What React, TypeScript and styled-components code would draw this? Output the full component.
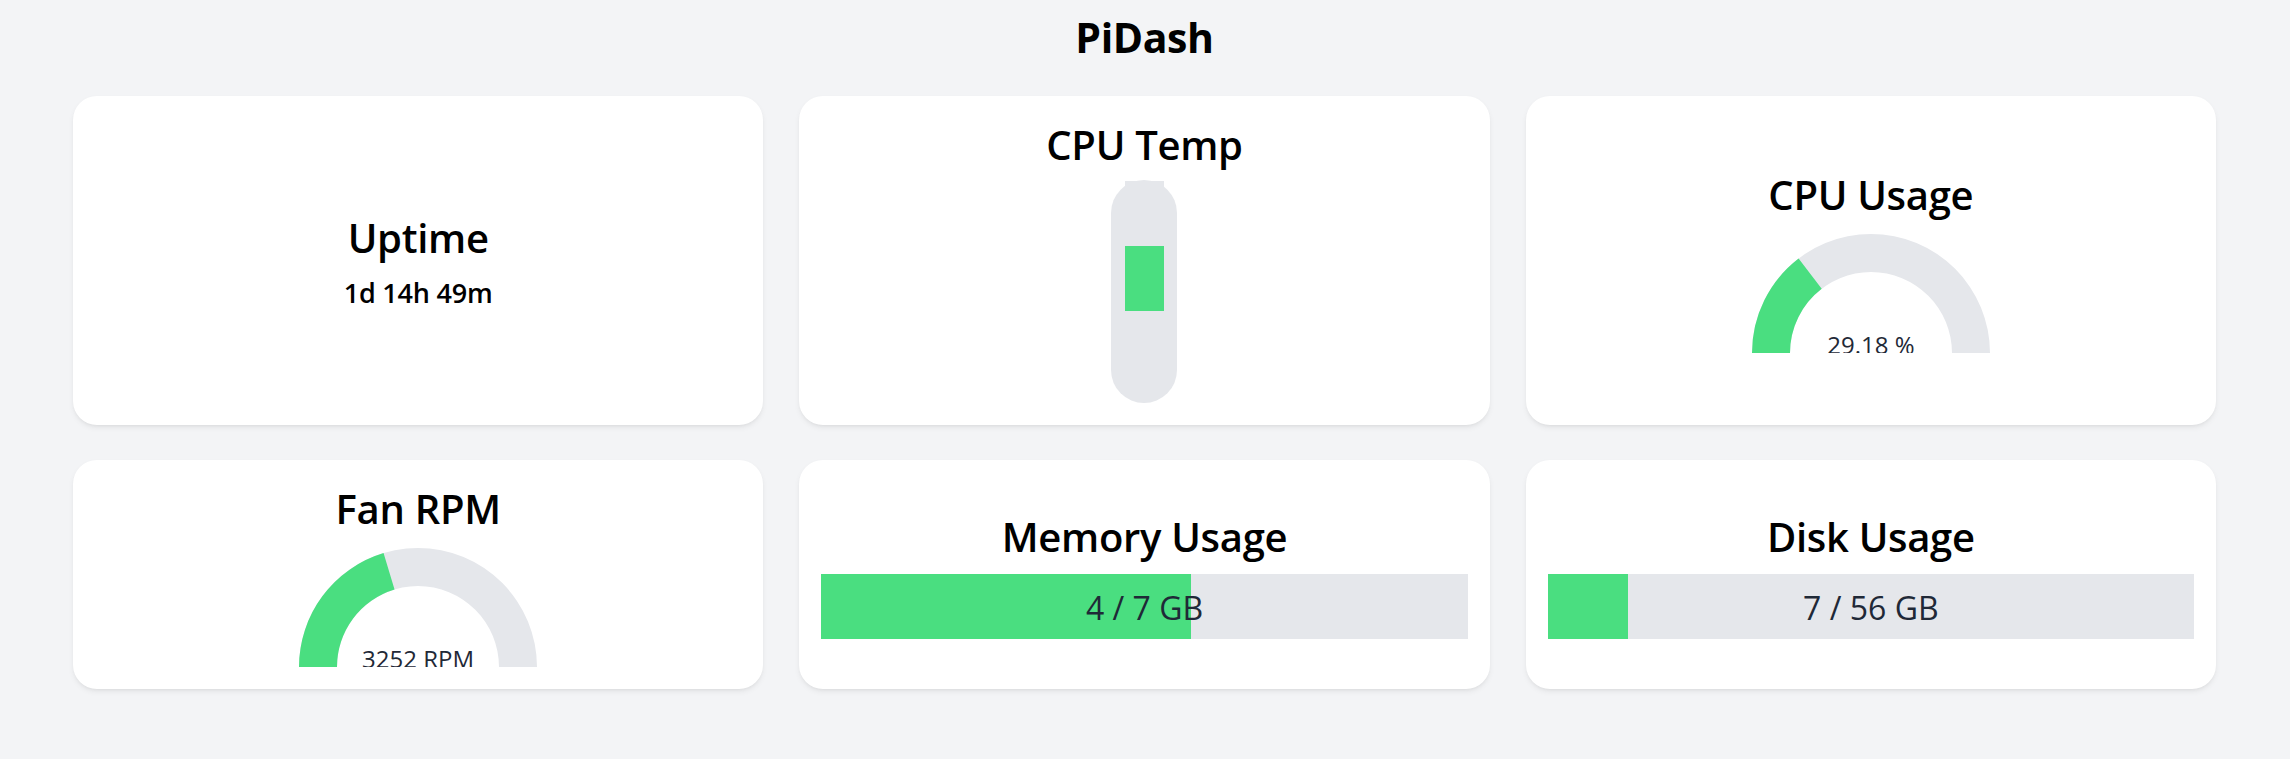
import React from "react";
import styled, { createGlobalStyle } from "styled-components";

const GlobalStyle = createGlobalStyle`
  html, body {
    margin: 0;
    padding: 0;
    background: #f3f4f6;
    font-family: "Open Sans", "Noto Sans", "Liberation Sans", sans-serif;
    color: #000;
  }
  * { box-sizing: border-box; }
`;

const GREEN = "#4ade80";
const TRACK = "#e5e7eb";

const Page = styled.div`
  padding: 13px 74px 40px 73px;
  display: flex;
  flex-direction: column;
  gap: 35px;
`;

const Header = styled.h1`
  margin: 0;
  text-align: center;
  font-size: 41px;
  line-height: 48px;
  font-weight: 700;
  font-stretch: 92%;
  letter-spacing: -0.4px;
`;

const Grid = styled.div`
  display: grid;
  grid-template-columns: repeat(3, 1fr);
  column-gap: 36px;
  row-gap: 35px;
`;

const Card = styled.section<{ $gap: number }>`
  background: #fff;
  border-radius: 24px;
  box-shadow: 0 3px 6px -1px rgba(0, 0, 0, 0.08), 0 2px 4px -2px rgba(0, 0, 0, 0.06);
  padding: 22px;
  display: flex;
  flex-direction: column;
  align-items: center;
  justify-content: center;
  gap: ${(p) => p.$gap}px;
`;

const Title = styled.h2`
  margin: 0;
  font-size: 40px;
  line-height: 54px;
  font-weight: 600;
  font-stretch: 92%;
  letter-spacing: -0.3px;
  text-align: center;
`;

const Value = styled.div`
  font-size: 27px;
  line-height: 36px;
  font-weight: 600;
  font-stretch: 92%;
  letter-spacing: -0.2px;
`;

const BarTrack = styled.div`
  width: 100%;
  height: 65px;
  background: ${TRACK};
  display: grid;
  grid-template: 1fr / 1fr;
`;

const BarFill = styled.div`
  grid-area: 1 / 1;
  height: 100%;
  background: ${GREEN};
`;

const BarLabel = styled.div`
  grid-area: 1 / 1;
  align-self: center;
  justify-self: center;
  font-size: 32px;
  font-weight: 400;
  font-stretch: 92%;
  color: #1f2937;
  line-height: 1;
  padding-top: 2px;
`;

const GaugeSvg = styled.svg`
  display: block;
  overflow: hidden;
`;

const GaugeText = styled.text`
  font-family: "Open Sans", "Noto Sans", sans-serif;
  font-size: 24px;
  font-stretch: 92%;
  fill: #1f2937;
`;

function sector(cx: number, cy: number, ro: number, ri: number, a0: number, a1: number) {
  const pt = (r: number, a: number) => [cx - r * Math.cos(a), cy - r * Math.sin(a)];
  const [x0, y0] = pt(ro, a0);
  const [x1, y1] = pt(ro, a1);
  const [x2, y2] = pt(ri, a1);
  const [x3, y3] = pt(ri, a0);
  const large = a1 - a0 > Math.PI ? 1 : 0;
  return `M ${x0} ${y0} A ${ro} ${ro} 0 ${large} 1 ${x1} ${y1} L ${x2} ${y2} A ${ri} ${ri} 0 ${large} 0 ${x3} ${y3} Z`;
}

function Gauge({ fraction, label }: { fraction: number; label: string }) {
  const w = 238;
  const h = 119;
  const cx = w / 2;
  const cy = h;
  const ro = 119;
  const ri = 81;
  return (
    <GaugeSvg width={w} height={h} viewBox={`0 0 ${w} ${h}`}>
      <path d={sector(cx, cy, ro, ri, 0, Math.PI)} fill={TRACK} />
      <path d={sector(cx, cy, ro, ri, 0, Math.PI * fraction)} fill={GREEN} />
      <GaugeText x={cx} y={h + 1} textAnchor="middle">
        {label}
      </GaugeText>
    </GaugeSvg>
  );
}

function Thermometer({ top, height }: { top: number; height: number }) {
  return (
    <svg width={66} height={223} viewBox="0 0 66 223" style={{ display: "block" }}>
      <rect x={0} y={0} width={66} height={223} rx={33} ry={33} fill={TRACK} />
      <rect x={14} y={1} width={39} height={8} fill={TRACK} />
      <rect x={14} y={top} width={39} height={height} fill={GREEN} />
    </svg>
  );
}

function UsageBar({ used, total }: { used: number; total: number }) {
  return (
    <BarTrack>
      <BarFill style={{ width: `${(used / total) * 100}%` }} />
      <BarLabel>
        {used} / {total} GB
      </BarLabel>
    </BarTrack>
  );
}

export default function App() {
  return (
    <>
      <GlobalStyle />
      <Page>
        <Header>PiDash</Header>
        <Grid>
          <Card $gap={10}>
            <Title>Uptime</Title>
            <Value>1d 14h 49m</Value>
          </Card>
          <Card $gap={8}>
            <Title>CPU Temp</Title>
            <Thermometer top={66} height={65} />
          </Card>
          <Card $gap={12}>
            <Title>CPU Usage</Title>
            <Gauge fraction={0.2918} label="29.18 %" />
          </Card>
          <Card $gap={12}>
            <Title>Fan RPM</Title>
            <Gauge fraction={3252 / 8000} label="3252 RPM" />
          </Card>
          <Card $gap={10}>
            <Title>Memory Usage</Title>
            <UsageBar used={4} total={7} />
          </Card>
          <Card $gap={10}>
            <Title>Disk Usage</Title>
            <UsageBar used={7} total={56} />
          </Card>
        </Grid>
      </Page>
    </>
  );
}
